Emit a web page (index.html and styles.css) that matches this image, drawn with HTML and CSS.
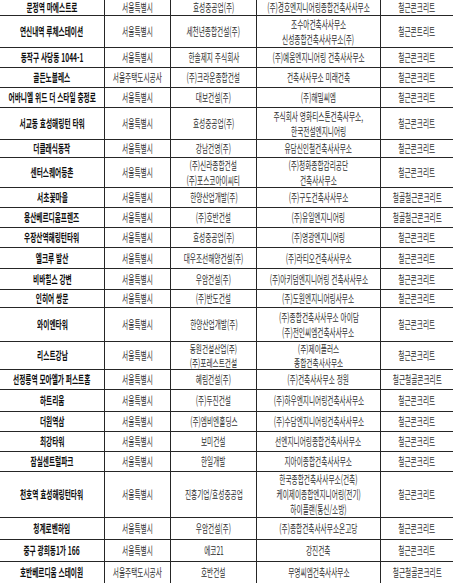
FILE: index.html
```html
<!DOCTYPE html>
<html lang="ko">
<head>
<meta charset="utf-8">
<title>건축물 목록</title>
<link rel="stylesheet" href="styles.css">
</head>
<body>
<table class="list">
  <colgroup>
    <col class="w1"><col class="w2"><col class="w3"><col class="w4"><col class="w5">
  </colgroup>
  <tbody>
    <tr class="h16">
      <td class="n"><div class="c"><span>문정역 마에스트로</span></div></td>
      <td><div class="c"><span>서울특별시</span></div></td>
      <td><div class="c"><span>효성중공업(주)</span></div></td>
      <td><div class="c"><span>(주)경호엔지니어링종합건축사사무소</span></div></td>
      <td><div class="c"><span>철근콘크리트</span></div></td>
    </tr>
    <tr class="h32">
      <td class="n"><div class="c"><span>연신내역 루체스테이션</span></div></td>
      <td><div class="c"><span>서울특별시</span></div></td>
      <td><div class="c"><span>세천년종합건설(주)</span></div></td>
      <td><div class="c"><span>조수아건축사사무소</span><span>신성종합건축사사무소(주)</span></div></td>
      <td><div class="c"><span>철근콘트리트</span></div></td>
    </tr>
    <tr class="h20">
      <td class="n"><div class="c"><span>동작구 사당동 1044-1</span></div></td>
      <td><div class="c"><span>서울특별시</span></div></td>
      <td><div class="c"><span>한솔제지 주식회사</span></div></td>
      <td><div class="c"><span>(주)예움엔지니어링 건축사사무소</span></div></td>
      <td><div class="c"><span>철근콘크리트</span></div></td>
    </tr>
    <tr class="h20">
      <td class="n"><div class="c"><span>골든노블레스</span></div></td>
      <td><div class="c"><span>서울주택도시공사</span></div></td>
      <td><div class="c"><span>(주)크라운종합건설</span></div></td>
      <td><div class="c"><span>건축사사무소 미래건축</span></div></td>
      <td><div class="c"><span>철근콘크리트</span></div></td>
    </tr>
    <tr class="h20">
      <td class="n"><div class="c"><span>어바니엘 위드 더 스타일 충정로</span></div></td>
      <td><div class="c"><span>서울특별시</span></div></td>
      <td><div class="c"><span>대보건설(주)</span></div></td>
      <td><div class="c"><span>(주)해밀씨엠</span></div></td>
      <td><div class="c"><span>철근콘크리트</span></div></td>
    </tr>
    <tr class="h32">
      <td class="n"><div class="c"><span>서교동 효성해링턴 타워</span></div></td>
      <td><div class="c"><span>서울특별시</span></div></td>
      <td><div class="c"><span>효성중공업(주)</span></div></td>
      <td><div class="c"><span>주식회사 영화티스톤건축사무소,</span><span>한국전설엔지니어링</span></div></td>
      <td><div class="c"><span>철근콘크리트</span></div></td>
    </tr>
    <tr class="h18">
      <td class="n"><div class="c"><span>더클래식동작</span></div></td>
      <td><div class="c"><span>서울특별시</span></div></td>
      <td><div class="c"><span>강남건영(주)</span></div></td>
      <td><div class="c"><span>유담신인철건축사사무소</span></div></td>
      <td><div class="c"><span>철근콘크리트</span></div></td>
    </tr>
    <tr class="h30">
      <td class="n"><div class="c"><span>센터스퀘어등촌</span></div></td>
      <td><div class="c"><span>서울특별시</span></div></td>
      <td><div class="c tight"><span>(주)신라종합건설</span><span>(주)포스코아이씨티</span></div></td>
      <td><div class="c tight"><span>(주)청화종합감리공단</span><span>건축사사무소</span></div></td>
      <td><div class="c"><span>철근콘크리트</span></div></td>
    </tr>
    <tr class="h20">
      <td class="n"><div class="c"><span>서초꽃마을</span></div></td>
      <td><div class="c"><span>서울특별시</span></div></td>
      <td><div class="c"><span>한양산업개발(주)</span></div></td>
      <td><div class="c"><span>(주)구도건축사사무소</span></div></td>
      <td><div class="c"><span>철골철근콘크리트</span></div></td>
    </tr>
    <tr class="h20">
      <td class="n"><div class="c"><span>용산베르디움프렌즈</span></div></td>
      <td><div class="c"><span>서울특별시</span></div></td>
      <td><div class="c"><span>(주)호반건설</span></div></td>
      <td><div class="c"><span>(주)유일엔지니어링</span></div></td>
      <td><div class="c"><span>철골철근콘크리트</span></div></td>
    </tr>
    <tr class="h20">
      <td class="n"><div class="c"><span>우장산역해링턴타워</span></div></td>
      <td><div class="c"><span>서울특별시</span></div></td>
      <td><div class="c"><span>효성중공업(주)</span></div></td>
      <td><div class="c"><span>(주)영광엔지니어링</span></div></td>
      <td><div class="c"><span>철근콘크리트</span></div></td>
    </tr>
    <tr class="h21">
      <td class="n"><div class="c"><span>엘크루 발산</span></div></td>
      <td><div class="c"><span>서울특별시</span></div></td>
      <td><div class="c"><span>대우조선해양건설(주)</span></div></td>
      <td><div class="c"><span>(주)라티오건축사사무소</span></div></td>
      <td><div class="c"><span>철근콘크리트</span></div></td>
    </tr>
    <tr class="h21">
      <td class="n"><div class="c"><span>비바힐스 강변</span></div></td>
      <td><div class="c"><span>서울특별시</span></div></td>
      <td><div class="c"><span>우암건설(주)</span></div></td>
      <td><div class="c"><span>(주)아키덤엔지니어링 건축사사무소</span></div></td>
      <td><div class="c"><span>철근콘크리트</span></div></td>
    </tr>
    <tr class="h18">
      <td class="n"><div class="c"><span>인히어 쌍문</span></div></td>
      <td><div class="c"><span>서울특별시</span></div></td>
      <td><div class="c"><span>(주)반도건설</span></div></td>
      <td><div class="c"><span>(주)도원엔지니어링사무소</span></div></td>
      <td><div class="c"><span>철근콘크리트</span></div></td>
    </tr>
    <tr class="h34">
      <td class="n"><div class="c"><span>와이엔타워</span></div></td>
      <td><div class="c"><span>서울특별시</span></div></td>
      <td><div class="c"><span>한양산업개발(주)</span></div></td>
      <td><div class="c"><span>(주)종합건축사사무소 아이담</span><span>(주)전인씨엠건축사사무소</span></div></td>
      <td><div class="c"><span>철근콘크리트</span></div></td>
    </tr>
    <tr class="h28">
      <td class="n"><div class="c"><span>리스트강남</span></div></td>
      <td><div class="c"><span>서울특별시</span></div></td>
      <td><div class="c tighter"><span>동원건설산업(주)</span><span>(주)포레스트건설</span></div></td>
      <td><div class="c tighter"><span>(주)제이플러스</span><span>종합건축사사무소</span></div></td>
      <td><div class="c"><span>철근콘크리트</span></div></td>
    </tr>
    <tr class="h20">
      <td class="n"><div class="c"><span>선정릉역 모아엘가 퍼스트홈</span></div></td>
      <td><div class="c"><span>서울특별시</span></div></td>
      <td><div class="c"><span>혜림건설(주)</span></div></td>
      <td><div class="c"><span>(주)건축사사무소 정원</span></div></td>
      <td><div class="c"><span>철근철골콘크리트</span></div></td>
    </tr>
    <tr class="h22">
      <td class="n"><div class="c"><span>하트리움</span></div></td>
      <td><div class="c"><span>서울특별시</span></div></td>
      <td><div class="c"><span>(주)두진건설</span></div></td>
      <td><div class="c"><span>(주)하우엔지니어링건축사사무소</span></div></td>
      <td><div class="c"><span>철근콘크리트</span></div></td>
    </tr>
    <tr class="h20">
      <td class="n"><div class="c"><span>더원역삼</span></div></td>
      <td><div class="c"><span>서울특별시</span></div></td>
      <td><div class="c"><span>(주)엠비엔홀딩스</span></div></td>
      <td><div class="c"><span>(주)수담엔지니어링건축사사무소</span></div></td>
      <td><div class="c"><span>철근콘크리트</span></div></td>
    </tr>
    <tr class="h20">
      <td class="n"><div class="c"><span>최강타워</span></div></td>
      <td><div class="c"><span>서울특별시</span></div></td>
      <td><div class="c"><span>보미건설</span></div></td>
      <td><div class="c"><span>선엔지니어링종합건축사사무소</span></div></td>
      <td><div class="c"><span>철근콘크리트</span></div></td>
    </tr>
    <tr class="h20">
      <td class="n"><div class="c"><span>잠실센트럴파크</span></div></td>
      <td><div class="c"><span>서울특별시</span></div></td>
      <td><div class="c"><span>한일개발</span></div></td>
      <td><div class="c"><span>지아이종합건축사사무소</span></div></td>
      <td><div class="c"><span>철근콘크리트</span></div></td>
    </tr>
    <tr class="h46">
      <td class="n"><div class="c"><span>천호역 효성해링턴타워</span></div></td>
      <td><div class="c"><span>서울특별시</span></div></td>
      <td><div class="c"><span>진흥기업/효성중공업</span></div></td>
      <td><div class="c"><span>한국종합건축사사무소(건축)</span><span>케이제이종합엔지니어링(전기)</span><span>하이플랜(통신/소방)</span></div></td>
      <td><div class="c"><span>철근콘크리트</span></div></td>
    </tr>
    <tr class="h22">
      <td class="n"><div class="c"><span>청계로벤하임</span></div></td>
      <td><div class="c"><span>서울특별시</span></div></td>
      <td><div class="c"><span>우암건설(주)</span></div></td>
      <td><div class="c"><span>(주)종합건축사사무소온고당</span></div></td>
      <td><div class="c"><span>철근콘크리트</span></div></td>
    </tr>
    <tr class="h22">
      <td class="n"><div class="c"><span>중구 광희동1가 166</span></div></td>
      <td><div class="c"><span>서울특별시</span></div></td>
      <td><div class="c"><span>에코21</span></div></td>
      <td><div class="c"><span>강진건축</span></div></td>
      <td><div class="c"><span>철근콘크리트</span></div></td>
    </tr>
    <tr class="h22">
      <td class="n"><div class="c"><span>호반베르디움 스테이원</span></div></td>
      <td><div class="c"><span>서울주택도시공사</span></div></td>
      <td><div class="c"><span>호반건설</span></div></td>
      <td><div class="c"><span>무영씨엠건축사사무소</span></div></td>
      <td><div class="c"><span>철근철골콘크리트</span></div></td>
    </tr>
  </tbody>
</table>
</body>
</html>
```

FILE: styles.css
```css
html, body {
  margin: 0;
  padding: 0;
  background: #ffffff;
  overflow: hidden;
}

.list {
  border-collapse: separate;
  border-spacing: 0;
  table-layout: fixed;
  width: 453px;
  font-family: "Noto Sans CJK KR", "Noto Sans", sans-serif;
  font-size: 11.5px;
  color: #2e2e2e;
}

.w1 { width: 105px; }
.w2 { width: 66px; }
.w3 { width: 86px; }
.w4 { width: 124px; }
.w5 { width: 72px; }

.list td {
  padding: 0;
  box-sizing: border-box;
  border-bottom: 1px solid #262626;
  border-right: 1px solid #262626;
  vertical-align: middle;
}

.list td:last-child {
  border-right: none;
}

.list td.n {
  font-weight: 700;
  color: #0d0d0d;
}

.c {
  display: flex;
  flex-direction: column;
  align-items: center;
  line-height: 15px;
}

.c span {
  display: block;
  white-space: nowrap;
  transform: scaleX(0.58);
}

.c.tight {
  font-size: 11px;
  line-height: 14.5px;
}

.c.tight span {
  transform: scaleX(0.606);
}

.c.tighter {
  font-size: 10.5px;
  line-height: 13.5px;
}

.c.tighter span {
  transform: scaleX(0.635);
}

.h16 { height: 16px; }
.h18 { height: 18px; }
.h20 { height: 20px; }
.h21 { height: 21px; }
.h22 { height: 22px; }
.h28 { height: 28px; }
.h30 { height: 30px; }
.h32 { height: 32px; }
.h34 { height: 34px; }
.h46 { height: 46px; }
```
